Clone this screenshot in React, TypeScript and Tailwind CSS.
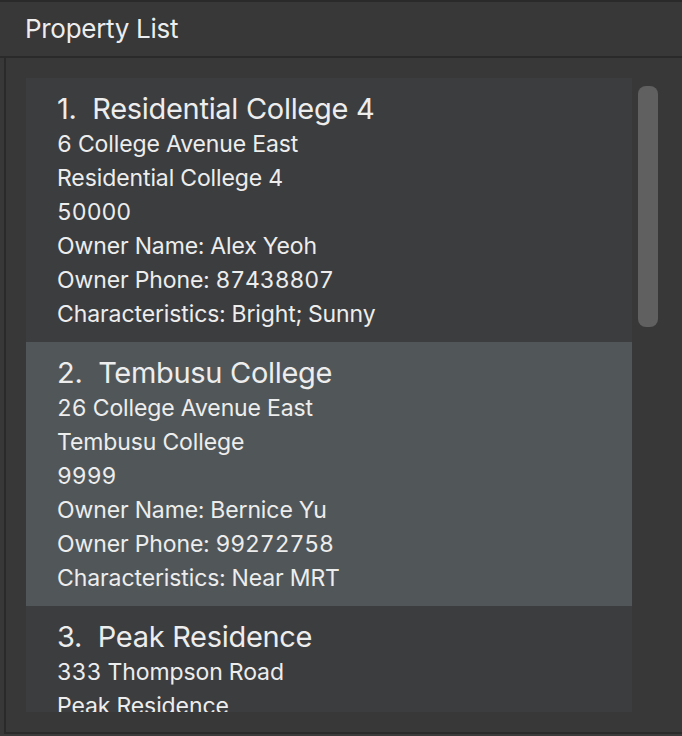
import React from "react";

type Property = {
  name: string;
  address: string;
  price: string;
  owner: string;
  phone: string;
  characteristics: string;
};

const properties: Property[] = [
  {
    name: "Residential College 4",
    address: "6 College Avenue East",
    price: "50000",
    owner: "Alex Yeoh",
    phone: "87438807",
    characteristics: "Bright; Sunny",
  },
  {
    name: "Tembusu College",
    address: "26 College Avenue East",
    price: "9999",
    owner: "Bernice Yu",
    phone: "99272758",
    characteristics: "Near MRT",
  },
  {
    name: "Peak Residence",
    address: "333 Thompson Road",
    price: "120000",
    owner: "Charlotte Oliveiro",
    phone: "93210283",
    characteristics: "Quiet",
  },
];

function PropertyCard({ property, index, selected }: { property: Property; index: number; selected: boolean }) {
  return (
    <div className={`pl-[31px] pt-[13px] pb-[11px] ${selected ? "bg-[#515759]" : "bg-[#3c3d3f]"}`}>
      <div className="text-[29px] leading-[36px] tracking-[-0.3px]">
        {index + 1}.&nbsp;&nbsp;{property.name}
      </div>
      <div className="text-[23px] leading-[34px] tracking-[-0.1px] [font-variant-numeric:tabular-nums]">
        <p>{property.address}</p>
        <p>{property.name}</p>
        <p>{property.price}</p>
        <p>Owner Name: {property.owner}</p>
        <p>Owner Phone: {property.phone}</p>
        <p>Characteristics: {property.characteristics}</p>
      </div>
    </div>
  );
}

export default function App() {
  return (
    <div
      className="flex h-[736px] w-[682px] flex-col overflow-hidden border-t-2 border-[#2a2a2a] bg-[#383838] text-[#ededed]"
      style={{ fontFamily: "Inter, 'Noto Sans', sans-serif" }}
    >
      <header className="flex h-[56px] shrink-0 items-center border-b-2 border-[#2a2a2a] px-[25px]">
        <h1 className="pb-[2px] text-[26px] tracking-[-0.3px]">Property List</h1>
      </header>

      <div className="relative ml-[4px] flex-1 border-b-2 border-l-2 border-[#2a2a2a] pl-[20px] pt-[20px]">
        <div className="h-[634px] w-[606px] overflow-hidden">
          {properties.map((p, i) => (
            <PropertyCard key={p.name} property={p} index={i} selected={i === 1} />
          ))}
        </div>
        <div className="absolute left-[632px] top-[28px] h-[241px] w-[20px] rounded-[8px] bg-[#606060]" />
      </div>
      <div className="h-[2px] shrink-0 bg-[#3a3a3a]" />
    </div>
  );
}
